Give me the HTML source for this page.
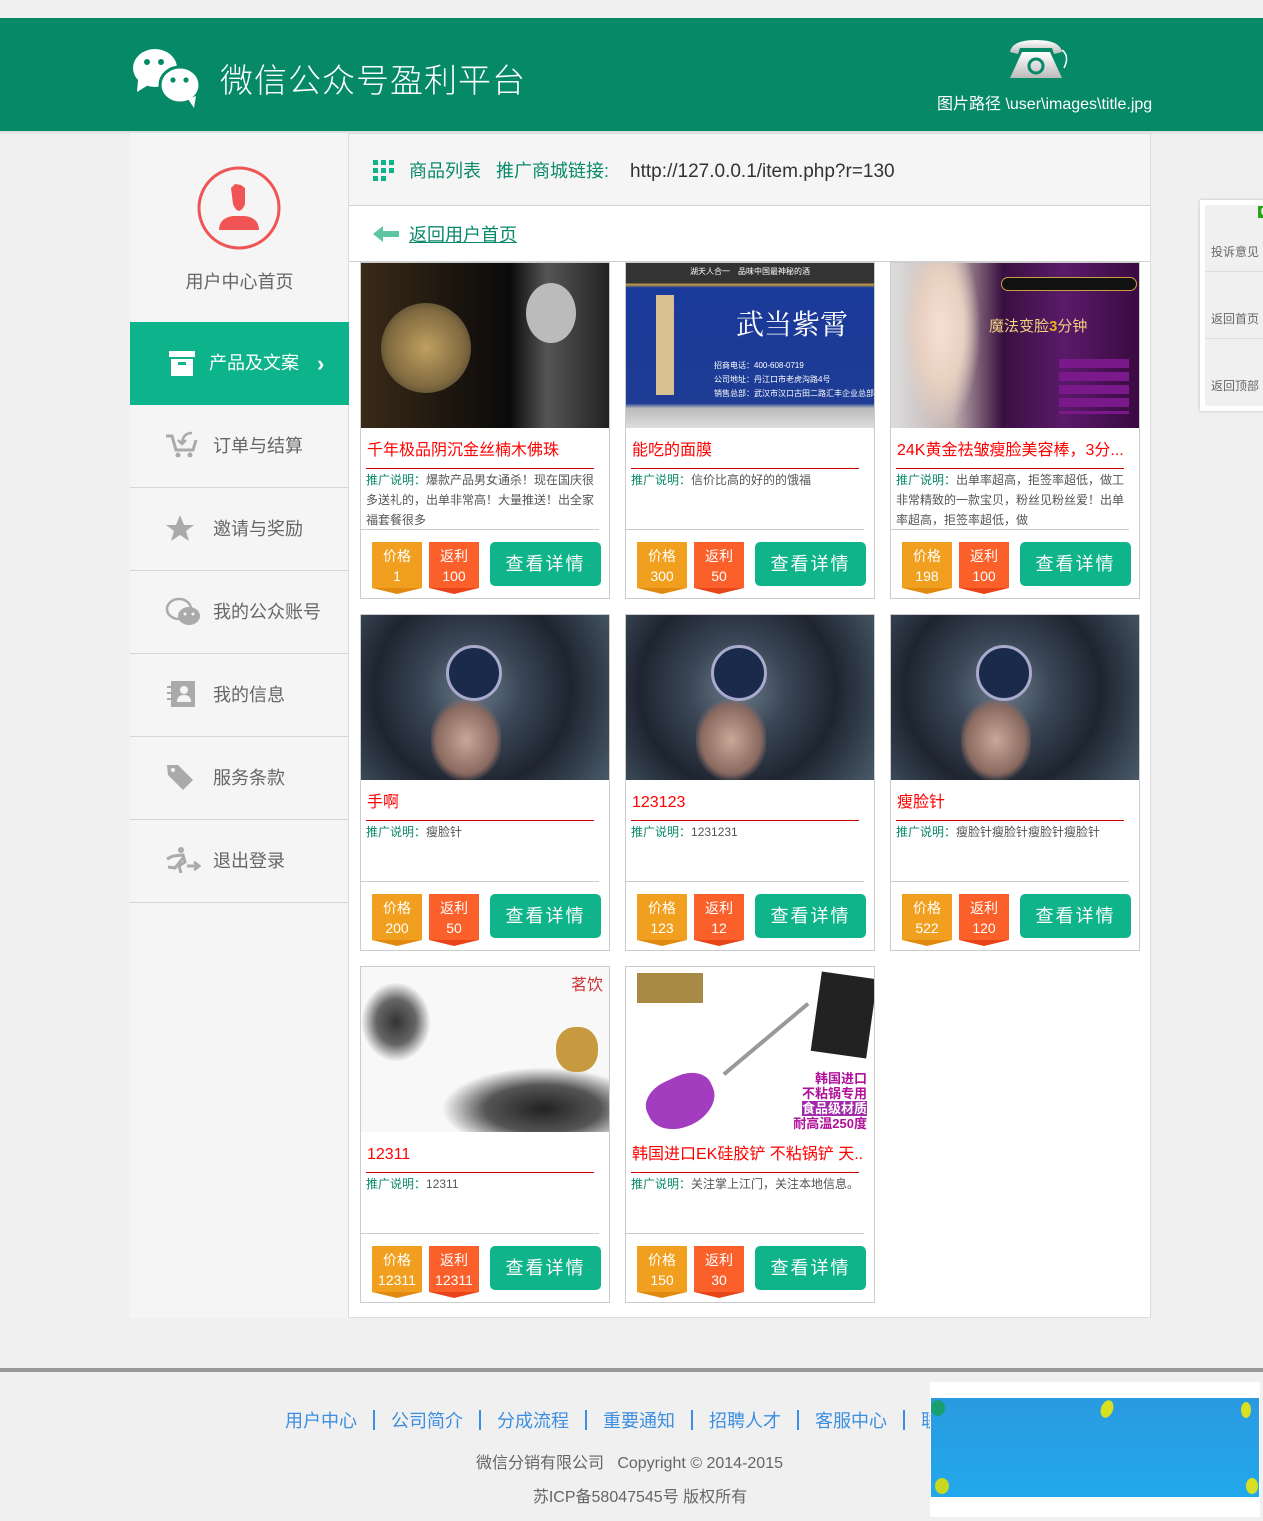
<!DOCTYPE html>
<html><head><meta charset="utf-8"><style>
*{margin:0;padding:0;box-sizing:border-box}
body{width:1263px;height:1521px;background:#f0f0f0;font-family:"Liberation Sans","Microsoft YaHei","Noto Sans CJK SC",sans-serif;position:relative;overflow:hidden}
.abs{position:absolute}
.hdr{left:0;top:18px;width:1263px;height:113px;background:#058966}
.hdrsh{left:0;top:131px;width:1263px;height:4px;background:linear-gradient(#d8d8d8,#f0f0f0)}
.side{left:130px;top:133px;width:219px;height:1185px;background:#f5f5f5;border-right:1px solid #ddd}
.main{left:349px;top:133px;width:802px;height:1185px;background:#fff;border:1px solid #ddd;border-left:none}
.nav{position:absolute;left:0;width:219px;height:83px;border-bottom:1px solid #d6d6d6;font-size:18px;color:#666;line-height:83px}
.nav span{position:absolute;left:83px}
.nav svg{position:absolute;left:35px;top:26px}
.card{position:absolute;width:250px;height:337px;border:1px solid #ccc;background:#fff}
.card .img{position:absolute;left:0;top:0;width:248px;height:165px;overflow:hidden}
.card .t{position:absolute;left:6px;top:176px;height:24px;line-height:24px;font-size:16px;color:#f00;white-space:nowrap}
.card .rl{position:absolute;left:5px;top:205px;width:228px;height:1px;background:#c00}
.card .d{position:absolute;left:5px;top:207px;width:232px;font-size:12px;line-height:20px;color:#555}
.card .d b{font-weight:normal;color:#0a8a6a}
.card .gl{position:absolute;left:0;top:266px;width:238px;height:1px;background:#ccc}
.bd{position:absolute;top:279px;width:50px;height:46px;color:#fff;text-align:center;font-size:14px;line-height:20px;padding-top:4px}
.bd:after{content:"";position:absolute;left:0;top:46px;border-left:25px solid transparent;border-right:25px solid transparent;border-top:6px solid}
.bp{left:11px;background:#f0a01e}.bp:after{border-top-color:#e08a10}
.br{left:68px;background:#fb5f2a}.br:after{border-top-color:#e8441a}
.btn{position:absolute;left:129px;top:279px;width:111px;height:44px;background:#10b48a;border-radius:5px;color:#fff;font-size:18px;text-align:center;line-height:44px;letter-spacing:2px}
.fl{color:#3c8fe0;font-size:18px}
.fl i{font-style:normal;display:inline-block;width:2px;height:20px;background:#3c8fe0;margin:0 16px;vertical-align:-3px}
.tech{background:radial-gradient(circle at 45% 45%,#6a7a8a 0,#3a4656 30%,#1e2530 60%,#4a5a6a 100%)}
.tech:before{content:"";position:absolute;left:70px;top:85px;width:70px;height:80px;border-radius:40% 40% 20% 20%;background:radial-gradient(ellipse,#c9a898 0,#8a6a60 60%,transparent 75%)}
.tech:after{content:"";position:absolute;left:85px;top:30px;width:50px;height:50px;border-radius:50%;border:3px solid #aac;background:#1a2a4a}
</style></head><body>
<div class="abs hdr"></div><div class="abs hdrsh"></div>
<svg class="abs" style="left:130px;top:44px" width="80" height="66" viewBox="0 0 80 66">
<ellipse cx="25" cy="24" rx="22" ry="19" fill="#fff"/><path d="M8 36 L7 48 L20 40Z" fill="#fff"/>
<circle cx="17" cy="18" r="3" fill="#058966"/><circle cx="31" cy="18" r="3" fill="#058966"/>
<ellipse cx="50" cy="41" rx="20" ry="18" fill="#fff" stroke="#058966" stroke-width="3"/><path d="M58 55 L64 64 L66 52Z" fill="#fff"/>
<circle cx="43" cy="36" r="2.6" fill="#058966"/><circle cx="56" cy="36" r="2.6" fill="#058966"/></svg>
<div class="abs" style="left:220px;top:54px;color:#fff;font-size:33px;letter-spacing:1px;font-weight:300">微信公众号盈利平台</div>
<svg class="abs" style="left:1008px;top:38px" width="62" height="44" viewBox="0 0 62 44"><defs><linearGradient id="g" x1="0" y1="0" x2="0" y2="1"><stop offset="0" stop-color="#fff"/><stop offset="1" stop-color="#bbb"/></linearGradient></defs>
<path d="M2 14 Q4 2 28 2 Q52 2 54 14 L46 16 L44 10 L12 10 L10 16Z" fill="url(#g)"/>
<path d="M14 14 L42 14 L54 40 L2 40Z" fill="url(#g)"/><circle cx="28" cy="28" r="7" fill="none" stroke="#058966" stroke-width="3"/><path d="M54 12 Q62 18 56 30" stroke="#fff" stroke-width="1.5" fill="none"/></svg>
<div class="abs" style="left:937px;top:90px;color:#fff;font-size:16px">图片路径 \user\images\title.jpg</div>

<div class="abs side">
<svg style="position:absolute;left:67px;top:33px" width="84" height="84" viewBox="0 0 84 84"><circle cx="42" cy="42" r="40" fill="none" stroke="#f05455" stroke-width="3"/>
<path d="M34 22 L38 18 L44 19 L48 22 L48 38 Q46 44 42 45 Q38 44 36 38Z M22 64 Q22 52 36 50 L48 50 Q62 52 62 64Z" fill="#f05455"/></svg>
<div style="position:absolute;left:0;width:219px;top:135px;text-align:center;font-size:18px;color:#666">用户中心首页</div>
<div class="nav" style="top:189px;background:#0db38a;color:#fff;border-bottom:none"><svg width="28" height="28" style="left:38px;top:28px"><rect x="1" y="1" width="26" height="6" fill="#fff"/><rect x="3" y="9" width="22" height="17" fill="#fff"/><rect x="10" y="12" width="8" height="3" fill="#0db38a"/></svg><span style="left:79px">产品及文案</span><span style="left:187px;font-weight:bold;font-size:22px">›</span></div>
<div class="nav" style="top:272px"><svg width="34" height="28"><path d="M1 5 L7 5 L11 19 L28 19 L31 9" stroke="#aaa" stroke-width="3" fill="none"/><circle cx="13" cy="24" r="2.5" fill="#aaa"/><circle cx="25" cy="24" r="2.5" fill="#aaa"/><path d="M27 2 Q18 2 17 12 M13 9 L17 13 L21 9" stroke="#aaa" stroke-width="2.5" fill="none"/></svg><span>订单与结算</span></div>
<div class="nav" style="top:355px"><svg width="30" height="30"><path d="M15 1 L19 11 L29 11 L21 17 L24 27 L15 21 L6 27 L9 17 L1 11 L11 11Z" fill="#aaa"/></svg><span>邀请与奖励</span></div>
<div class="nav" style="top:438px"><svg width="36" height="30"><ellipse cx="14" cy="12" rx="12" ry="10" fill="none" stroke="#aaa" stroke-width="2.5"/><ellipse cx="24" cy="19" rx="11" ry="9" fill="#aaa"/><circle cx="20" cy="17" r="1.5" fill="#f5f5f5"/><circle cx="28" cy="17" r="1.5" fill="#f5f5f5"/></svg><span>我的公众账号</span></div>
<div class="nav" style="top:521px"><svg width="32" height="30"><rect x="6" y="1" width="24" height="26" fill="#aaa"/><rect x="2" y="6" width="6" height="2" fill="#aaa"/><rect x="2" y="12" width="6" height="2" fill="#aaa"/><rect x="2" y="18" width="6" height="2" fill="#aaa"/><circle cx="19" cy="10" r="4" fill="#f5f5f5"/><path d="M12 22 Q12 15 19 15 Q26 15 26 22Z" fill="#f5f5f5"/></svg><span>我的信息</span></div>
<div class="nav" style="top:604px"><svg width="30" height="30"><path d="M2 2 L13 2 L28 17 L18 27 L3 12Z" fill="#aaa"/><circle cx="8" cy="7" r="2" fill="#f5f5f5"/></svg><span>服务条款</span></div>
<div class="nav" style="top:687px"><svg width="38" height="30"><circle cx="16" cy="4" r="3" fill="#aaa"/><path d="M8 10 L18 9 L20 16 L14 20 L16 27 M18 12 L10 22 L3 21 M2 13 L8 10" stroke="#aaa" stroke-width="3" fill="none"/><path d="M22 20 L32 20 M29 16 L34 20 L29 24" stroke="#aaa" stroke-width="3" fill="none"/></svg><span>退出登录</span></div>
</div>

<div class="abs main">
<div style="position:absolute;left:0;top:0;width:801px;height:72px;background:#f5f5f5;border-bottom:1px solid #d0d0d0"></div>
<svg style="position:absolute;left:24px;top:26px" width="22" height="22"><g fill="#0db38a"><rect x="0" y="0" width="5" height="5"/><rect x="8" y="0" width="5" height="5"/><rect x="16" y="0" width="5" height="5"/><rect x="0" y="8" width="5" height="5"/><rect x="8" y="8" width="5" height="5"/><rect x="16" y="8" width="5" height="5"/><rect x="0" y="16" width="5" height="5"/><rect x="8" y="16" width="5" height="5"/></g></svg>
<div style="position:absolute;left:60px;top:23px;font-size:18px;color:#0a8a6a;white-space:nowrap">商品列表 &nbsp; 推广商城链接: <span style="color:#333;margin-left:16px;font-size:19px">http://127.0.0.1/item.php?r=130</span></div>
<div style="position:absolute;left:0;top:127px;width:801px;height:1px;background:#d0d0d0"></div>
<svg style="position:absolute;left:24px;top:91px" width="26" height="18"><path d="M0 9 L10 1 L10 6 L26 6 L26 12 L10 12 L10 17Z" fill="#5cc6a2"/></svg>
<div style="position:absolute;left:60px;top:87px;font-size:18px;color:#0a8a6a;text-decoration:underline">返回用户首页</div>
</div>

<!-- row 1 -->
<div class="card" style="left:360px;top:262px"><div class="img" style="background:linear-gradient(90deg,#3a2a18 0,#1a140e 40%,#0a0a0a 60%,#555 75%,#222 100%)"><div style="position:absolute;left:20px;top:40px;width:90px;height:90px;border-radius:50%;background:radial-gradient(#c0a060,#806a40 60%,#2a2a20)"></div><div style="position:absolute;left:165px;top:20px;width:50px;height:60px;border-radius:50%;background:#bbb"></div></div>
<div class="t">千年极品阴沉金丝楠木佛珠</div><div class="rl"></div><div class="d"><b>推广说明：</b>爆款产品男女通杀！现在国庆很多送礼的，出单非常高！大量推送！出全家福套餐很多</div><div class="gl"></div>
<div class="bd bp">价格<br>1</div><div class="bd br">返利<br>100</div><div class="btn">查看详情</div></div>
<div class="card" style="left:625px;top:262px"><div class="img" style="background:linear-gradient(#333 0,#333 12%,#c8a040 13%,#1a3a9a 15%,#1e3c94 85%,#bbb 88%,#ddd 100%)"><div style="position:absolute;left:0;top:3px;width:248px;text-align:center;color:#fff;font-size:8px">湖天人合一　品味中国最神秘的酒</div><div style="position:absolute;left:30px;top:32px;width:18px;height:100px;background:#d8c090"></div><div style="position:absolute;left:110px;top:40px;color:#fff;font-size:28px;font-family:'Noto Serif CJK SC',serif">武当紫霄</div><div style="position:absolute;left:88px;top:96px;color:#fff;font-size:8px;line-height:14px">招商电话：400-608-0719<br>公司地址：丹江口市老虎沟路4号<br>销售总部：武汉市汉口古田二路汇丰企业总部</div></div>
<div class="t">能吃的面膜</div><div class="rl"></div><div class="d"><b>推广说明：</b>信价比高的好的的饿福</div><div class="gl"></div>
<div class="bd bp">价格<br>300</div><div class="bd br">返利<br>50</div><div class="btn">查看详情</div></div>
<div class="card" style="left:890px;top:262px"><div class="img" style="background:linear-gradient(90deg,#ddd 0,#c0b0b0 25%,#3a1040 45%,#5a1a6a 70%,#3a0a40 100%)"><div style="position:absolute;left:10px;top:0;width:80px;height:165px;background:radial-gradient(ellipse at 50% 40%,#f4e0d4 0,#e8d0c0 40%,transparent 70%)"></div><div style="position:absolute;left:110px;top:14px;width:136px;height:14px;border:1px solid #c8a040;border-radius:7px;background:#111"></div><div style="position:absolute;left:98px;top:52px;color:#f0d080;font-size:15px">魔法变脸<b style="color:#e8b020">3</b>分钟</div><div style="position:absolute;left:168px;top:96px;width:70px;height:55px;background:repeating-linear-gradient(#7a1a8a 0,#7a1a8a 9px,transparent 9px,transparent 13px)"></div></div>
<div class="t">24K黄金祛皱瘦脸美容棒，3分...</div><div class="rl"></div><div class="d"><b>推广说明：</b>出单率超高，拒签率超低，做工非常精致的一款宝贝，粉丝见粉丝爱！出单率超高，拒签率超低，做</div><div class="gl"></div>
<div class="bd bp">价格<br>198</div><div class="bd br">返利<br>100</div><div class="btn">查看详情</div></div>
<!-- row 2 -->
<div class="card" style="left:360px;top:614px"><div class="img tech"></div>
<div class="t">手啊</div><div class="rl"></div><div class="d"><b>推广说明：</b>瘦脸针</div><div class="gl"></div>
<div class="bd bp">价格<br>200</div><div class="bd br">返利<br>50</div><div class="btn">查看详情</div></div>
<div class="card" style="left:625px;top:614px"><div class="img tech"></div>
<div class="t">123123</div><div class="rl"></div><div class="d"><b>推广说明：</b>1231231</div><div class="gl"></div>
<div class="bd bp">价格<br>123</div><div class="bd br">返利<br>12</div><div class="btn">查看详情</div></div>
<div class="card" style="left:890px;top:614px"><div class="img tech"></div>
<div class="t">瘦脸针</div><div class="rl"></div><div class="d"><b>推广说明：</b>瘦脸针瘦脸针瘦脸针瘦脸针</div><div class="gl"></div>
<div class="bd bp">价格<br>522</div><div class="bd br">返利<br>120</div><div class="btn">查看详情</div></div>
<!-- row 3 -->
<div class="card" style="left:360px;top:966px"><div class="img" style="background:#f8f8f8"><div style="position:absolute;left:0;top:15px;width:70px;height:80px;background:radial-gradient(ellipse,#333 0,#666 40%,transparent 70%)"></div><div style="position:absolute;left:80px;top:100px;width:170px;height:70px;background:radial-gradient(ellipse at 60% 60%,#222 0,#555 40%,transparent 70%)"></div><div style="position:absolute;left:195px;top:60px;width:42px;height:45px;border-radius:45%;background:#c89a40"></div><div style="position:absolute;left:210px;top:4px;color:#c33;font-size:16px">茗饮</div></div>
<div class="t">12311</div><div class="rl"></div><div class="d"><b>推广说明：</b>12311</div><div class="gl"></div>
<div class="bd bp">价格<br>12311</div><div class="bd br">返利<br>12311</div><div class="btn">查看详情</div></div>
<div class="card" style="left:625px;top:966px"><div class="img" style="background:#fff"><div style="position:absolute;left:11px;top:6px;width:66px;height:30px;background:#a88a44"></div><div style="position:absolute;left:190px;top:8px;width:56px;height:80px;background:#222;transform:rotate(8deg)"></div><div style="position:absolute;left:20px;top:110px;width:70px;height:50px;border-radius:40% 40% 50% 50%;background:#a43cc0;transform:rotate(-25deg)"></div><div style="position:absolute;left:85px;top:70px;width:110px;height:4px;background:#999;transform:rotate(-40deg)"></div><div style="position:absolute;left:145px;top:104px;color:#b0109a;font-size:13px;font-weight:bold;text-align:right;line-height:15px;width:96px">韩国进口<br>不粘锅专用<br><span style="background:#a02aaa;color:#fff">食品级材质</span><br>耐高温250度</div></div>
<div class="t">韩国进口EK硅胶铲 不粘锅铲 天..</div><div class="rl"></div><div class="d"><b>推广说明：</b>关注掌上江门，关注本地信息。</div><div class="gl"></div>
<div class="bd bp">价格<br>150</div><div class="bd br">返利<br>30</div><div class="btn">查看详情</div></div>

<!-- right float -->
<div class="abs" style="left:1200px;top:200px;width:70px;height:211px;background:#fff;box-shadow:0 0 3px #bbb;padding:5px 0 0 5px"><div style="background:#f0f0f0;height:201px;position:relative;font-size:12px;color:#666">
<div style="position:absolute;right:0;top:1px;background:#2aa31a;color:#fff;font-size:11px;font-weight:bold;padding:0 3px">0</div>
<div style="position:absolute;left:6px;top:38px">投诉意见</div><div style="position:absolute;left:0;top:66px;width:65px;height:1px;background:#ddd"></div>
<div style="position:absolute;left:6px;top:105px">返回首页</div><div style="position:absolute;left:0;top:133px;width:65px;height:1px;background:#ddd"></div>
<div style="position:absolute;left:6px;top:172px">返回顶部</div></div></div>

<!-- footer -->
<div class="abs" style="left:0;top:1368px;width:1263px;height:4px;background:#999"></div>
<div class="abs fl" style="left:285px;top:1407px;white-space:nowrap">用户中心<i></i>公司简介<i></i>分成流程<i></i>重要通知<i></i>招聘人才<i></i>客服中心<i></i>联系我们</div>
<div class="abs" style="left:0;width:1263px;text-align:center;top:1449px;color:#666;font-size:16px;padding-right:4px">微信分销有限公司 &nbsp; Copyright © 2014-2015</div>
<div class="abs" style="left:0;width:1280px;text-align:center;top:1483px;color:#666;font-size:16px">苏ICP备58047545号 版权所有</div>
<div class="abs" style="left:930px;top:1382px;width:330px;height:135px;background:#fff"><div style="position:absolute;left:1px;top:16px;width:328px;height:99px;background:linear-gradient(#2a9ae0,#22a8ec)"><div style="position:absolute;left:170px;top:2px;width:12px;height:18px;border-radius:50%;background:#d8e020;transform:rotate(20deg)"></div><div style="position:absolute;left:0;top:2px;width:14px;height:16px;border-radius:50%;background:#1aa070"></div><div style="position:absolute;left:310px;top:4px;width:10px;height:16px;border-radius:50%;background:#d8e020"></div><div style="position:absolute;left:4px;top:80px;width:14px;height:16px;border-radius:50%;background:#c8d820"></div><div style="position:absolute;left:315px;top:80px;width:12px;height:16px;border-radius:50%;background:#d8e020"></div></div></div>
</body></html>
